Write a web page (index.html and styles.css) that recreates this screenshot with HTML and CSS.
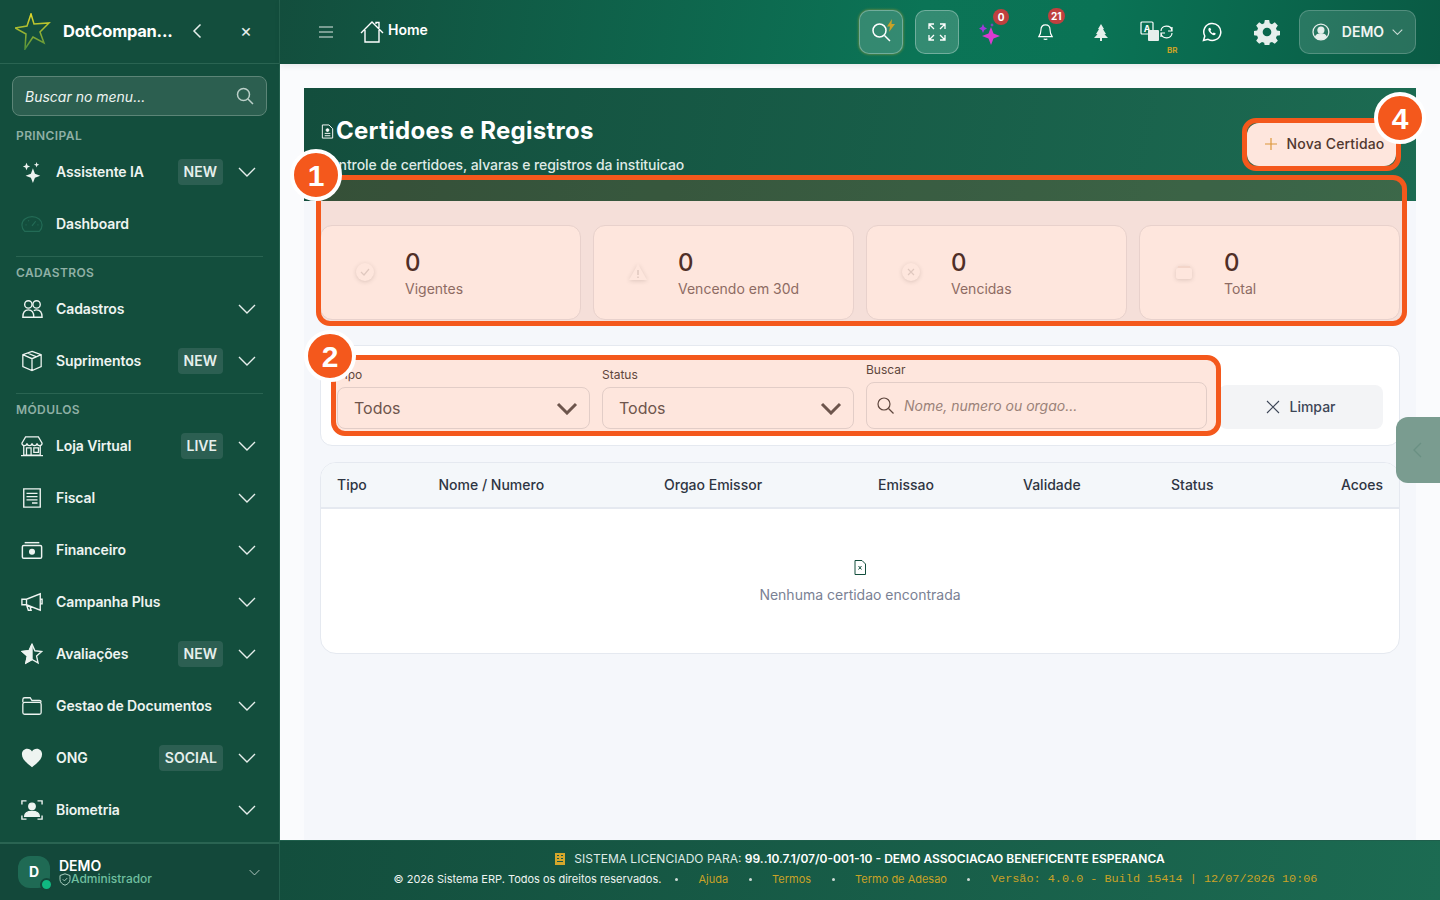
FILE: index.html
```html
<!DOCTYPE html>
<html lang="pt-BR">
<head>
<meta charset="UTF-8" />
<meta name="viewport" content="width=device-width, initial-scale=1" />
<title>Certidoes e Registros</title>
<link rel="stylesheet" href="styles.css">
</head>
<body>
<svg class="sprite" width="0" height="0">
  <symbol id="chev" viewBox="0 0 18 10"><path d="M1 1l8 8 8-8" fill="none" stroke="currentColor" stroke-width="1.4"/></symbol>
</svg>

<!-- Menu lateral -->
<aside class="sidebar">
  <div class="side-head">
    <svg class="logo" width="36" height="37" viewBox="0 0 36 37" fill="none">
      <defs><linearGradient id="lg" x1="0" y1="0" x2="0" y2="1"><stop offset="0" stop-color="#e4d92a"/><stop offset="1" stop-color="#4f8f3a"/></linearGradient></defs>
      <path d="M16 1l3 10 15-1-9 9 4 11-11-6-8 12 1-15L0 15l12-2z" stroke="url(#lg)" stroke-width="1.500" stroke-linejoin="miter"/>
    </svg>
    <span class="brand">DotCompan...</span>
    <svg class="head-back" width="10" height="16" viewBox="0 0 10 16"><path d="M8.500 1.500L2 8l6.500 6.500" fill="none" stroke="#e6efec" stroke-width="1.500"/></svg>
    <span class="head-close">×</span>
  </div>

  <div class="side-search">
    <span>Buscar no menu...</span>
    <svg width="18" height="18" viewBox="0 0 18 18" fill="none" stroke="#bcd0c9" stroke-width="1.500"><circle cx="7.500" cy="7.500" r="6"/><path d="M12 12l5 5"/></svg>
  </div>

  <div class="side-label">PRINCIPAL</div>
  <a class="item">
    <svg class="ico" viewBox="0 0 24 24" fill="currentColor"><path d="M13 8l2.200 5.800L21 16l-5.800 2.200L13 24l-2.200-5.800L5 16l5.800-2.200zM6 2l1.200 2.800L10 6 7.200 7.200 6 10 4.800 7.200 2 6l2.800-1.200zM17 1l.8 2.200L20 4l-2.200.8L17 7l-.8-2.200L14 4l2.200-.8z"/></svg>
    <span class="item-text">Assistente IA</span><b class="tag">NEW</b>
    <svg class="chev"><use href="#chev"/></svg>
  </a>
  <a class="item">
    <svg class="ico dim" viewBox="0 0 24 24" fill="none" stroke="currentColor" stroke-width="1.300"><path d="M4 20h16c2-2 3-4.500 3-7 0-5-5-9-11-9S1 8 1 13c0 2.500 1 5 3 7z"/><path d="M12 14l4-5M5 13h1M18 13h1M8 8l.6.8"/></svg>
    <span class="item-text">Dashboard</span>
  </a>
  <div class="side-line"></div>

  <div class="side-label">CADASTROS</div>
  <a class="item">
    <svg class="ico" viewBox="0 0 24 24" fill="none" stroke="currentColor" stroke-width="1.500"><circle cx="8" cy="7" r="4"/><circle cx="17" cy="7" r="4"/><path d="M2 21c0-5 2-8 6-8s6 3 6 8zM14 14c1-.8 2-1 3-1 4 0 6 3 6 8h-9"/></svg>
    <span class="item-text">Cadastros</span>
    <svg class="chev"><use href="#chev"/></svg>
  </a>
  <a class="item">
    <svg class="ico" viewBox="0 0 24 24" fill="none" stroke="currentColor" stroke-width="1.400"><path d="M12 1.500l10 3.500v13l-10 4.500L2 18V5zM2 5l10 4.500L22 5M12 9.500V22.500M7 3.300l10 4.200"/></svg>
    <span class="item-text">Suprimentos</span><b class="tag">NEW</b>
    <svg class="chev"><use href="#chev"/></svg>
  </a>
  <div class="side-line"></div>

  <div class="side-label">MÓDULOS</div>
  <a class="item">
    <svg class="ico" viewBox="0 0 24 24" fill="none" stroke="currentColor" stroke-width="1.400"><path d="M5 2h14l4 7c0 1.500-1 2.500-2.800 2.500S17.500 10.500 17.500 9c0 1.500-1.500 2.500-2.800 2.500S12 10.500 12 9c0 1.500-1.300 2.500-2.700 2.500S6.500 10.500 6.500 9c0 1.500-1 2.500-2.700 2.500S1 10.500 1 9z"/><path d="M3 12v10h18V12M0 22.500h24M6 14h5v8H6zM14 14h5v5h-5z"/></svg>
    <span class="item-text">Loja Virtual</span><b class="tag">LIVE</b>
    <svg class="chev"><use href="#chev"/></svg>
  </a>
  <a class="item">
    <svg class="ico" viewBox="0 0 24 24" fill="none" stroke="currentColor" stroke-width="1.500"><path d="M3 2h18v20H3z"/><path d="M6 7h12M6 10.500h12M6 14h12M12 17.500h6"/></svg>
    <span class="item-text">Fiscal</span>
    <svg class="chev"><use href="#chev"/></svg>
  </a>
  <a class="item">
    <svg class="ico" viewBox="0 0 24 24" fill="none" stroke="currentColor" stroke-width="1.600"><rect x="1.500" y="7" width="21" height="14" rx="1.500"/><circle cx="12" cy="14" r="2.500" fill="currentColor"/><path d="M4 4h16"/></svg>
    <span class="item-text">Financeiro</span>
    <svg class="chev"><use href="#chev"/></svg>
  </a>
  <a class="item">
    <svg class="ico" viewBox="0 0 24 24" fill="none" stroke="currentColor" stroke-width="1.500"><path d="M1 9h5l15-6v18L6 15H1zM6 9v6M21 9h2v5h-2M6 15l2 6h3l-1.500-5"/></svg>
    <span class="item-text">Campanha Plus</span>
    <svg class="chev"><use href="#chev"/></svg>
  </a>
  <a class="item">
    <svg class="ico" viewBox="0 0 24 24" fill="none" stroke="currentColor" stroke-width="1.500"><path d="M12 1.500l3.200 7 7.300.8-5.500 5 1.600 7.400L12 18l-6.600 3.700L7 14.300l-5.500-5 7.300-.8z"/><path d="M12 1.500L8.800 8.500l-7.300.8 5.500 5-1.600 7.400L12 18z" fill="currentColor"/></svg>
    <span class="item-text">Avaliações</span><b class="tag">NEW</b>
    <svg class="chev"><use href="#chev"/></svg>
  </a>
  <a class="item">
    <svg class="ico" viewBox="0 0 24 24" fill="none" stroke="currentColor" stroke-width="1.400"><path d="M2 8V5c0-1 .8-2 2-2h6l2 3h8c1 0 2 1 2 2"/><rect x="2" y="8" width="20" height="13" rx="2"/></svg>
    <span class="item-text">Gestao de Documentos</span>
    <svg class="chev"><use href="#chev"/></svg>
  </a>
  <a class="item">
    <svg class="ico" viewBox="0 0 24 24" fill="currentColor"><path d="M12 22C5 16.500 1 13 1 8c0-3.500 2.500-6 5.800-6C9 2 11 3 12 5c1-2 3-3 5.200-3C20.500 2 23 4.500 23 8c0 5-4 8.500-11 14z"/></svg>
    <span class="item-text">ONG</span><b class="tag">SOCIAL</b>
    <svg class="chev"><use href="#chev"/></svg>
  </a>
  <a class="item">
    <svg class="ico" viewBox="0 0 24 24" fill="none" stroke="currentColor" stroke-width="1.500"><path d="M1 6V2h5M18 2h5v4M1 18v4h5M18 22h5v-4"/><circle cx="12" cy="8" r="3.500" fill="currentColor"/><path d="M4 19c0-3.500 3-5.500 8-5.500s8 2 8 5.500z" fill="currentColor"/></svg>
    <span class="item-text">Biometria</span>
    <svg class="chev"><use href="#chev"/></svg>
  </a>

  <div class="side-user">
    <div class="avatar">D<i></i></div>
    <div class="user-info">
      <strong>DEMO</strong>
      <span><svg width="12" height="13" viewBox="0 0 12 13" fill="none" stroke="#a9cfc0" stroke-width="1"><path d="M6 .8l5 1.700v4c0 2.800-2.200 4.700-5 5.700-2.800-1-5-2.900-5-5.700v-4z"/><path d="M3.800 6.300l1.600 1.600 2.800-2.800"/></svg>Administrador</span>
    </div>
    <svg class="user-chev"><use href="#chev"/></svg>
  </div>
</aside>

<div class="main">
  <!-- Barra superior -->
  <header class="topbar">
    <svg class="burger" width="14" height="12" viewBox="0 0 14 12" fill="none" stroke="#dfe9e5" stroke-width="1.200"><path d="M0 1h14M0 6h14M0 11h14"/></svg>
    <svg class="home" width="24" height="24" viewBox="0 0 24 24" fill="none" stroke="#fff" stroke-width="1.400"><path d="M1 13L12 2l11 11M5 10v12h14V10M16 4V2.500h3V8"/></svg>
    <span class="home-text">Home</span>
    <div class="top-right">
      <button class="top-btn glow">
        <svg width="20" height="20" viewBox="0 0 20 20" fill="none" stroke="#fff" stroke-width="1.500"><circle cx="8.500" cy="8.500" r="6.500"/><path d="M13.500 13.500L19 19"/></svg>
        <svg class="bolt" width="8" height="13" viewBox="0 0 8 13"><path d="M5 0L0 7.500h3L2 13l6-8H4.500z" fill="#c9a227"/></svg>
      </button>
      <button class="top-btn">
        <svg width="18" height="18" viewBox="0 0 18 18" fill="none" stroke="#fff" stroke-width="1.300"><path d="M1 6V1h5M1 1l5 5M17 6V1h-5M17 1l-5 5M1 12v5h5M1 17l5-5M17 12v5h-5M17 17l-5-5"/></svg>
      </button>
      <span class="top-ico">
        <svg width="26" height="26" viewBox="0 0 26 26"><path d="M12 8l2.500 6.500L21 17l-6.500 2.500L12 26l-2.500-6.500L3 17l6.500-2.500z" fill="#d93bd0"/><path d="M4 5l1.300 3L8 9.500 5.300 11 4 14l-1.300-3L0 9.500 2.700 8z" fill="#9d3bd9"/><path d="M13 4l.6 1.400L15 6l-1.400.6L13 8l-.6-1.400L11 6l1.400-.6z" fill="#9d3bd9"/></svg>
        <em class="count one">0</em>
      </span>
      <span class="top-ico">
        <svg class="bell" width="15" height="18" viewBox="0 0 18 20" fill="none" stroke="#fff" stroke-width="1.400"><path d="M9 1.500c3.500 0 5.500 2.500 5.500 6 0 4 1 6 2.500 8H1c1.500-2 2.500-4 2.500-8 0-3.500 2-6 5.500-6z"/><path d="M7 18c.5 1.200 3.500 1.200 4 0" stroke-width="1.600"/></svg>
        <em class="count two">21</em>
      </span>
      <span class="top-ico">
        <svg class="tree" width="14" height="17" viewBox="0 0 14 17" fill="#e6efec"><path d="M7 0l3 5-1 .2L12 10l-1.500.3L14 14H8v3H6v-3H0l3.500-3.700L2 10l3-4.800L4 5z"/></svg>
      </span>
      <span class="top-ico">
        <svg width="34" height="22" viewBox="0 0 34 22" fill="none" stroke="#fff" stroke-width="1.200"><rect x="1" y="1" width="12" height="12" rx="1"/><text x="7" y="10.500" font-size="9" font-family="Inter, sans-serif" font-weight="700" fill="#fff" stroke="none" text-anchor="middle">A</text><rect x="8" y="9" width="11" height="11" rx="1" fill="#e6efec" stroke="none"/><path d="M21 10c0-6 10-7 11 0M32 12c0 6-10 7-11 0M32 6v4h-4M21 16v-4h4"/></svg>
        <small class="lang">BR</small>
      </span>
      <span class="top-ico">
        <svg width="20" height="20" viewBox="0 0 20 20" fill="none" stroke="#fff" stroke-width="1.500"><path d="M1.500 18.500l1.300-4.500A8.500 8.500 0 1 1 6 17.300z"/><path d="M7 6c-1 1-1 2.500 1 4.800s4 3 5.200 2l.6-1.300-2-1-.9.800c-1-.4-2-1.400-2.500-2.600l.8-.9-1-2z" fill="#fff" stroke="none"/></svg>
      </span>
      <span class="top-ico">
        <svg width="26" height="26" viewBox="0 0 24 24" fill="#e6efec"><path d="M10 1h4l.6 3 2 .8 2.600-1.700 2.800 2.800-1.700 2.600.8 2 3 .6v3.800l-3 .6-.8 2 1.700 2.600-2.800 2.800-2.600-1.700-2 .8-.6 3h-4l-.6-3-2-.8-2.600 1.700-2.800-2.800 1.700-2.600-.8-2-3-.6v-3.800l3-.6.8-2-1.700-2.600 2.800-2.800 2.600 1.700 2-.8zM12 8a4 4 0 1 0 0 8 4 4 0 0 0 0-8z" fill-rule="evenodd"/></svg>
      </span>
      <button class="user-btn">
        <svg width="18" height="18" viewBox="0 0 18 18" fill="none" stroke="#e6efec" stroke-width="1.300"><circle cx="9" cy="9" r="8"/><circle cx="9" cy="7" r="3" fill="#e6efec"/><path d="M3.500 14c1-2 3-3 5.500-3s4.500 1 5.500 3c-3 2.800-8 2.800-11 0z" fill="#e6efec"/></svg>
        <span>DEMO</span>
        <svg width="11" height="6" viewBox="0 0 18 10"><path d="M1 1l8 8 8-8" fill="none" stroke="#c9dad4" stroke-width="1.800"/></svg>
      </button>
    </div>
  </header>

  <main class="content">
    <div class="page">
      <section class="hero">
        <div>
          <h1><svg width="15" height="15" viewBox="0 0 15 16" fill="none" stroke="#fff" stroke-width="1"><path d="M2 1h7l4 4v10H2z"/><circle cx="7.500" cy="6.500" r="1.500" fill="#fff"/><path d="M4.500 10h6M4.500 12.500h6"/></svg>Certidoes e Registros</h1>
          <p>Controle de certidoes, alvaras e registros da instituicao</p>
        </div>
        <button class="btn-new">
          <svg width="14" height="14" viewBox="0 0 14 14" fill="none" stroke="#d9a441" stroke-width="1.200"><path d="M7 1v12M1 7h12"/></svg>Nova Certidao
        </button>
      </section>

      <div class="inner">
        <section class="stats">
          <div class="stat">
            <div class="stat-ico"><svg width="20" height="20" viewBox="0 0 20 20"><circle cx="10" cy="10" r="9" fill="#fff"/><path d="M6 10l3 3 5-6" fill="none" stroke="#dcdcdc" stroke-width="1.200"/></svg></div>
            <div><strong>0</strong><span>Vigentes</span></div>
          </div>
          <div class="stat">
            <div class="stat-ico"><svg width="20" height="20" viewBox="0 0 20 20"><path d="M10 2l9 16H1z" fill="#fff"/><path d="M10 8v5M10 14.500v1.500" stroke="#dcdcdc" stroke-width="1.500"/></svg></div>
            <div><strong>0</strong><span>Vencendo em 30d</span></div>
          </div>
          <div class="stat">
            <div class="stat-ico"><svg width="20" height="20" viewBox="0 0 20 20"><circle cx="10" cy="10" r="9" fill="#fff"/><path d="M7 7l6 6M13 7l-6 6" stroke="#dcdcdc" stroke-width="1.200"/></svg></div>
            <div><strong>0</strong><span>Vencidas</span></div>
          </div>
          <div class="stat">
            <div class="stat-ico"><svg width="20" height="20" viewBox="0 0 20 20"><path d="M4 4h12v2H4z" fill="#f3ece8"/><rect x="2" y="6" width="16" height="11" rx="2" fill="#fff"/></svg></div>
            <div><strong>0</strong><span>Total</span></div>
          </div>
        </section>

        <section class="filters">
          <label class="field">
            <span>Tipo</span>
            <div class="select">Todos<svg width="22" height="13" viewBox="0 0 22 13"><path d="M2 2l9 9 9-9" fill="none" stroke="#555" stroke-width="3"/></svg></div>
          </label>
          <label class="field">
            <span>Status</span>
            <div class="select">Todos<svg width="22" height="13" viewBox="0 0 22 13"><path d="M2 2l9 9 9-9" fill="none" stroke="#555" stroke-width="3"/></svg></div>
          </label>
          <label class="field">
            <span>Buscar</span>
            <div class="search">
              <svg width="17" height="17" viewBox="0 0 17 17" fill="none" stroke="#444" stroke-width="1.200"><circle cx="7" cy="7" r="6"/><path d="M11.500 11.500L16.500 16.500"/></svg>
              <em>Nome, numero ou orgao...</em>
            </div>
          </label>
          <button class="btn-clear">
            <svg width="14" height="14" viewBox="0 0 14 14" fill="none" stroke="#3d4657" stroke-width="1.100"><path d="M1 1l12 12M13 1L1 13"/></svg>Limpar
          </button>
        </section>

        <section class="table">
          <div class="thead">
            <span>Tipo</span><span>Nome / Numero</span><span>Orgao Emissor</span><span>Emissao</span><span>Validade</span><span>Status</span><span>Acoes</span>
          </div>
          <div class="empty">
            <svg width="12" height="15" viewBox="0 0 12 15" fill="none" stroke="#134e3d" stroke-width="1"><path d="M1 .5h7l3.500 3.500v10.500H1z"/><path d="M4.500 6l3 3.500M7.500 6l-3 3.500"/></svg>
            <p>Nenhuma certidao encontrada</p>
          </div>
        </section>
      </div>
    </div>

    <!-- Marcacoes sobre a tela -->
    <div class="mark mark-1"></div>
    <div class="mark mark-2"></div>
    <div class="mark mark-4"></div>
    <div class="pin pin-1">1</div>
    <div class="pin pin-2">2</div>
    <div class="pin pin-4">4</div>
    <div class="side-tab"><svg width="9" height="16" viewBox="0 0 9 16"><path d="M8 1L1 8l7 7" fill="none" stroke="#6a9083" stroke-width="1.300"/></svg></div>
  </main>

  <footer class="footer">
    <div class="foot-line">
      <svg width="10" height="12" viewBox="0 0 10 12" fill="#d4a72c"><path d="M0 0h10v12H0z"/><path d="M2 2h2v1H2zM6 2h2v1H6zM2 5h2v1H2zM6 5h2v1H6zM2 8h6v1H2z" fill="#14574a"/></svg>
      <span>SISTEMA LICENCIADO PARA: <b>99..10.7.1/07/0-001-10 - DEMO ASSOCIACAO BENEFICENTE ESPERANCA</b></span>
    </div>
    <div class="foot-links">
      <span>© 2026 Sistema ERP. Todos os direitos reservados.</span><i></i>
      <a>Ajuda</a><i></i>
      <a>Termos</a><i></i>
      <a>Termo de Adesao</a><i></i>
      <code>Versão: 4.0.0 - Build 15414 | 12/07/2026 10:06</code>
    </div>
  </footer>
</div>
</body>
</html>
```

FILE: styles.css
```css
* { box-sizing: border-box; }
body {
  font-family: Inter, 'Liberation Sans', sans-serif;
  margin: 0;
  height: 900px;
  overflow: hidden;
  display: flex;
  background: #fafbfd;
  color: #333;
}
.sprite { position: absolute; }

/* Menu lateral */
.sidebar {
  width: 280px;
  flex-shrink: 0;
  height: 900px;
  background: #134e3d;
  border-right: 1px solid #24604e;
  display: flex;
  flex-direction: column;
  overflow: hidden;
}
.side-head {
  height: 64px;
  flex-shrink: 0;
  border-bottom: 1px solid #2a6452;
  display: flex;
  align-items: center;
  padding-left: 15px;
}
.brand {
  margin: -2px 0 0 12px;
  width: 111px;
  color: #fff;
  font-size: 16.5px;
  font-weight: 700;
  letter-spacing: -0.25px;
  white-space: nowrap;
}
.head-back { margin: -1px 0 0 18px; }
.head-close {
  margin: -2px 0 0 38px;
  color: #e6efec;
  font-size: 18px;
  line-height: 1;
}
.side-search {
  margin: 12px 12px 0;
  height: 40px;
  flex-shrink: 0;
  background: #2c5f50;
  border: 1px solid #5c8577;
  border-radius: 8px;
  display: flex;
  align-items: center;
  justify-content: space-between;
  padding: 0 12px;
  color: #eef4f1;
  font-size: 14px;
  font-style: italic;
}
.side-label {
  height: 16px;
  margin: 11px 16px 3px;
  color: #8fb0a5;
  font-size: 12px;
  font-weight: 600;
  line-height: 18px;
  letter-spacing: 0.4px;
}
.side-line {
  height: 1px;
  background: #2a6452;
  margin: 6px 16px 0 16px;
  flex-shrink: 0;
}
.side-line + .side-label { margin-top: 7px; }
.item {
  height: 52px;
  flex-shrink: 0;
  display: flex;
  align-items: center;
  padding: 0 23px 0 20px;
  color: #eef4f1;
  font-size: 14px;
  font-weight: 600;
}
.ico {
  width: 22px;
  height: 22px;
  margin: 0 13px 0 1px;
  flex-shrink: 0;
}
.ico.dim { color: #236b56; }
.item-text { flex: 1; white-space: nowrap; letter-spacing: -0.1px; margin-top: -2px; }
.tag {
  height: 26px;
  line-height: 26px;
  padding: 0 6px;
  background: #2c5f52;
  border-radius: 4px;
  color: #e6efec;
  font-size: 14px;
  font-weight: 600;
  margin-right: 15px;
}
.chev {
  width: 18px;
  height: 10px;
  color: #e6efec;
  flex-shrink: 0;
}
.item-text + .chev { margin-left: 15px; }
.side-user {
  margin-top: auto;
  height: 58px;
  flex-shrink: 0;
  background: #13483a;
  border-top: 2px solid #2a6452;
  display: flex;
  align-items: center;
  padding: 0 18px;
}
.avatar {
  position: relative;
  width: 32px;
  height: 32px;
  background: #1f6a54;
  border-radius: 12px;
  color: #fff;
  font-size: 14px;
  font-weight: 700;
  text-align: center;
  line-height: 32px;
}
.avatar i {
  position: absolute;
  right: -1px;
  bottom: -1px;
  width: 9px;
  height: 9px;
  background: #10b981;
  border: 2px solid #13483a;
  border-radius: 50%;
  box-sizing: content-box;
  margin: -2px;
}
.user-info { margin-left: 9px; flex: 1; }
.user-info strong {
  display: block;
  color: #fff;
  font-size: 14px;
  font-weight: 600;
  line-height: 14px;
}
.user-info span {
  display: flex;
  align-items: center;
  color: #6fbf9f;
  font-size: 12px;
  font-weight: 500;
  line-height: 12px;
}

.user-chev { width: 11px; height: 7px; color: #c9dad4; margin-right: 1px; }

/* Barra superior */
.main {
  flex: 1;
  min-width: 0;
  display: flex;
  flex-direction: column;
}
.topbar {
  height: 64px;
  flex-shrink: 0;
  background: linear-gradient(100deg, #134e3d 0%, #0b7456 55%, #0a7355 70%, #0a5a44 100%);
  display: flex;
  align-items: center;
  padding: 0 24px 0 39px;
  box-shadow: 0 2px 6px rgba(0,0,0,0.08);
  z-index: 2;
}
.burger { margin-right: 27px; }
.home { margin-top: -1px; }
.home-text {
  margin: -5px 0 0 4px;
  color: #fff;
  font-size: 14px;
  font-weight: 600;
}
.top-right {
  margin-left: auto;
  display: flex;
  align-items: center;
  gap: 11px;
}
.top-btn {
  position: relative;
  width: 44px;
  height: 44px;
  background: rgba(255,255,255,0.17);
  border: 1px solid rgba(255,255,255,0.3);
  border-radius: 10px;
  padding: 0;
  display: flex;
  align-items: center;
  justify-content: center;
}
.top-btn + .top-btn { margin-left: 1px; }
.top-btn.glow { box-shadow: 0 0 3px rgba(212,167,44,0.7); }
.bolt { position: absolute; top: 8px; right: 7px; }
.top-ico {
  position: relative;
  width: 44px;
  height: 44px;
  display: flex;
  align-items: center;
  justify-content: center;
}
.bell { margin-right: 4px; }
.tree { margin-right: 2px; }
.count {
  position: absolute;
  height: 16px;
  min-width: 16px;
  padding: 0 3px;
  background: #c0403f;
  border-radius: 8px;
  color: #fff;
  font-size: 10px;
  font-style: normal;
  font-weight: 700;
  line-height: 16px;
  text-align: center;
}
.count.one { top: -1px; left: 23px; }
.count.two { top: -2px; left: 23px; }
.lang {
  position: absolute;
  left: 32px;
  bottom: -1px;
  color: #c9a227;
  font-size: 8px;
  font-weight: 700;
}
.user-btn {
  width: 117px;
  height: 44px;
  margin-left: -1px;
  background: rgba(255,255,255,0.13);
  border: 1px solid rgba(255,255,255,0.2);
  border-radius: 10px;
  display: flex;
  align-items: center;
  padding: 0 12px;
  color: #f0f5f3;
  font-family: inherit;
  font-size: 14px;
  font-weight: 600;
}
.user-btn span { margin: -1px 8px 0 12px; }

/* Conteudo */
.content {
  flex: 1;
  position: relative;
  min-height: 0;
  padding: 24px 24px 0;
}
.page {
  height: 100%;
  background: #f5f7fb;
}
.hero {
  height: 113px;
  background: linear-gradient(100deg, #134e3d 0%, #1c6b52 100%);
  display: flex;
  justify-content: space-between;
  padding: 28px 20px 0 16px;
  color: #fff;
}
.hero h1 {
  margin: 0;
  display: flex;
  align-items: center;
  gap: 1px;
  font-size: 24px;
  font-weight: 700;
  line-height: 30px;
  letter-spacing: 0.28px;
}
.hero p {
  margin: 10px 0 0;
  color: #dfeae6;
  font-size: 14px;
  font-weight: 500;
  line-height: 18px;
  letter-spacing: -0.08px;
}
.btn-new {
  height: 43px;
  width: 149px;
  margin-top: 7px;
  background: #fff;
  border: none;
  border-radius: 12px;
  color: #333;
  font-family: inherit;
  font-size: 14px;
  font-weight: 500;
  letter-spacing: 0.15px;
  padding: 0 0 2px 5px;
  display: flex;
  align-items: center;
  justify-content: center;
  gap: 9px;
}
.inner { padding: 24px 16px 0; }
.stats {
  display: grid;
  grid-template-columns: repeat(4, 1fr);
  gap: 12px;
}
.stat {
  height: 95px;
  background: #fff;
  border: 1px solid #e5e7eb;
  border-radius: 12px;
  display: flex;
  align-items: center;
  padding-left: 34px;
  gap: 29px;
}
.stat-ico {
  width: 21px;
  height: 21px;
  display: flex;
  filter: drop-shadow(0 1px 2px rgba(0,0,0,0.15));
}
.stat strong {
  display: block;
  color: #33292a;
  font-size: 24px;
  font-weight: 500;
  line-height: 32px;
}
.stat span {
  display: block;
  color: #7b6f70;
  font-size: 14px;
  line-height: 20px;
}
.filters {
  margin-top: 25px;
  height: 101px;
  background: #fff;
  border: 1px solid #e5e9f0;
  border-radius: 12px;
  display: grid;
  grid-template-columns: 253px 252px 341px 164px;
  column-gap: 12px;
  align-items: end;
  padding: 0 15px 16px 16px;
}
.field span {
  display: block;
  margin-bottom: 4px;
  color: #444;
  font-size: 12px;
  line-height: 16px;
}
.select {
  height: 42px;
  background: #fff;
  border: 1px solid #dfe2e6;
  border-radius: 8px;
  display: flex;
  align-items: center;
  justify-content: space-between;
  padding: 0 11px 0 16px;
  color: #555;
  font-size: 16px;
}
.search {
  height: 47px;
  background: #fff;
  border: 1px solid #dfe2e6;
  border-radius: 8px;
  display: flex;
  align-items: center;
  gap: 10px;
  padding: 0 10px;
}
.search em {
  color: #8a8a8a;
  font-size: 14px;
}
.btn-clear {
  height: 44px;
  background: #f3f4f6;
  border: none;
  border-radius: 8px;
  color: #3d4657;
  font-family: inherit;
  font-size: 14px;
  font-weight: 500;
  padding: 0 0 1px;
  display: flex;
  align-items: center;
  justify-content: center;
  gap: 9px;
}
.table {
  margin-top: 16px;
  height: 192px;
  background: #fff;
  border: 1px solid #e5e9f0;
  border-radius: 16px;
  overflow: hidden;
}
.thead {
  height: 46px;
  background: #f4f7fa;
  border-bottom: 2px solid #e5e9f0;
  display: grid;
  grid-template-columns: 101.5px 225.5px 214px 145px 148px 1fr auto;
  align-items: center;
  padding: 0 16px 2px;
  color: #2f3542;
  font-size: 14px;
  font-weight: 500;
}
.empty {
  text-align: center;
  padding-top: 51px;
}
.empty svg { display: block; margin: 0 auto; }
.empty p {
  margin: 10px 0 0;
  color: #7a8194;
  font-size: 14px;
  line-height: 20px;
}

/* Marcacoes */
.mark {
  position: absolute;
  background: rgba(249,87,26,0.15);
  border: 5px solid #f4581c;
  border-radius: 14px;
}
.mark-1 { left: 36px; top: 111px; width: 1091px; height: 151px; }
.mark-2 { left: 51px; top: 291px; width: 890px; height: 81px; }
.mark-4 { left: 962px; top: 54px; width: 159px; height: 53px; }
.pin {
  position: absolute;
  width: 52px;
  height: 52px;
  background: #f4581c;
  border: 4px solid #fff;
  border-radius: 50%;
  color: #fff;
  font-family: 'Liberation Sans', sans-serif;
  font-size: 30px;
  font-weight: 700;
  line-height: 46px;
  text-align: center;
}
.pin-1 { left: 10px; top: 85px; }
.pin-2 { left: 24px; top: 266px; }
.pin-4 { left: 1094px; top: 28px; }
.side-tab {
  position: absolute;
  right: 0;
  top: 353px;
  width: 44px;
  height: 66px;
  background: #7a9c90;
  border-radius: 12px 0 0 12px;
  display: flex;
  align-items: center;
  padding-left: 17px;
}

/* Rodape */
.footer {
  height: 60px;
  flex-shrink: 0;
  background: linear-gradient(100deg, #134e3d 0%, #1c6b52 100%);
  border-top: 1px solid #1f5f4c;
  color: #dfeae6;
  text-align: center;
  z-index: 1;
}
.foot-line {
  margin-top: 10px;
  display: flex;
  justify-content: center;
  align-items: center;
  gap: 9px;
  font-size: 12px;
  line-height: 16px;
}
.foot-line b { color: #fff; font-weight: 600; }
.foot-links {
  margin-top: 4px;
  display: flex;
  justify-content: center;
  align-items: center;
  gap: 20.5px;
  padding-right: 9px;
  font-size: 11px;
  line-height: 16px;
}
.foot-links span { color: #eef4f1; margin-right: -7px; }
.foot-links i {
  width: 3px;
  height: 3px;
  background: #cfdcd7;
  border-radius: 50%;
}
.foot-links a { color: #c9a227; }
.foot-links code {
  font-family: 'Liberation Mono', monospace;
  font-size: 11.84px;
  color: #c9a227;
}
```
